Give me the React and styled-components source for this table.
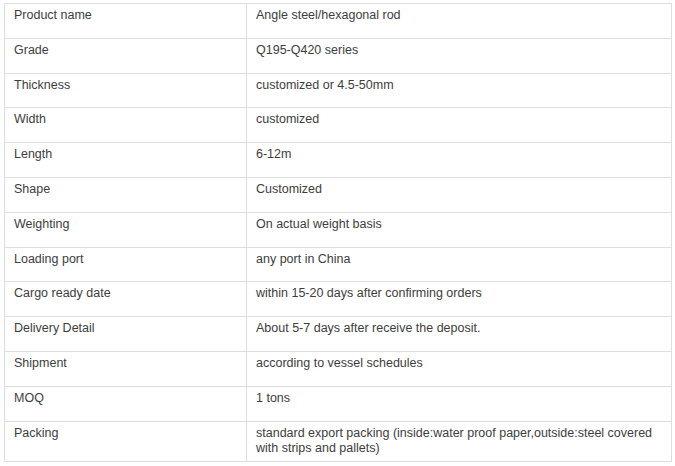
import React from 'react'
import styled, { createGlobalStyle } from 'styled-components'

const GlobalStyle = createGlobalStyle`
	html, body {
		margin: 0;
		padding: 0;
		background: #fff;
	}
	body {
		font-family: "Liberation Sans", Arial, sans-serif;
	}
`;

const specs = [
	['Product name', 'Angle steel/hexagonal rod'],
	['Grade', 'Q195-Q420 series'],
	['Thickness', 'customized or 4.5-50mm'],
	['Width', 'customized'],
	['Length', '6-12m'],
	['Shape', 'Customized'],
	['Weighting', 'On actual weight basis'],
	['Loading port', 'any port in China'],
	['Cargo ready date', 'within 15-20 days after confirming orders'],
	['Delivery Detail', 'About 5-7 days after receive the deposit.'],
	['Shipment', 'according to vessel schedules'],
	['MOQ', '1 tons'],
	['Packing', 'standard export packing (inside:water proof paper,outside:steel covered with strips and pallets)'],
];

export default function App() {
	return (
		<>
			<GlobalStyle />
			<Page>
				<SpecTable>
					<tbody>
						{specs.map(([label, value], i) => (
							<SpecRow key={label} last={i === specs.length - 1}>
								<Cell width="242px">{label}</Cell>
								<Cell>{value}</Cell>
							</SpecRow>
						))}
					</tbody>
				</SpecTable>
			</Page>
		</>
	)
}

const Page = styled.div`
	padding: 3px 4px 0 4px;
	width: 668px;
`;

const SpecTable = styled.table`
	width: 668px;
	border-collapse: collapse;
	table-layout: fixed;
`;

const SpecRow = styled.tr`
	height: ${props => props.last ? '40px' : '34.8px'};
`;

const Cell = styled.td`
	width: ${props => props.width || 'auto'};
	box-sizing: border-box;
	border: 1px solid #dedede;
	padding: 4px 10px 3px 9px;
	vertical-align: top;
	font-size: 12.5px;
	line-height: 15px;
	color: #3d3d3d;
`;
